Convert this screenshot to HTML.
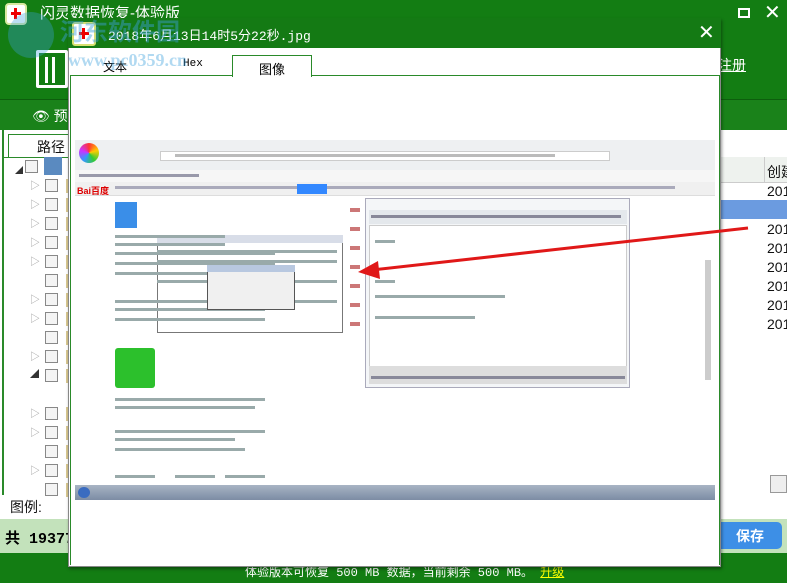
<!DOCTYPE html>
<html><head><meta charset="utf-8"><style>
*{margin:0;padding:0;box-sizing:border-box}
body{width:787px;height:583px;overflow:hidden;position:relative;background:#fff;font-family:"Liberation Sans","Noto Sans CJK SC",sans-serif}
.a{position:absolute}
.g{background:#137d13}
.t{color:#fff;font-size:14px;white-space:nowrap}
.cb{width:13px;height:13px;border:1px solid #888;background:#f4f4f4}
.r{font-size:14px;color:#111;white-space:nowrap}
.tx{height:3px;background:#9aa}
</style></head><body>
<div class="a g" style="left:0;top:0;width:787px;height:100px"></div>
<div class="a" style="left:5px;top:3px;width:22px;height:22px;background:#fff;border-radius:4px;border:2px solid #d8e8a0"><div class="a" style="left:4px;top:7px;width:10px;height:3px;background:#e00"></div><div class="a" style="left:7px;top:3px;width:3px;height:11px;background:#e00"></div></div>
<div class="a t" style="left:40px;top:2px;font-size:15px">闪灵数据恢复-体验版</div>
<div class="a" style="left:738px;top:8px;width:12px;height:10px;border:2px solid #fff"></div>
<div class="a t" style="left:764px;top:0;font-size:20px">✕</div>
<div class="a" style="left:36px;top:50px;width:32px;height:38px;border:3px solid #fff;border-radius:2px"><div class="a" style="left:6px;top:4px;width:3px;height:26px;background:#fff"></div><div class="a" style="left:13px;top:4px;width:3px;height:26px;background:#fff"></div></div>
<div class="a t" style="left:718px;top:55px;text-decoration:underline">注册</div>
<div class="a" style="left:0;top:99px;width:787px;height:1px;background:#0d5e0d"></div>
<div class="a" style="left:0;top:100px;width:787px;height:30px;background:#1a821a"></div>
<div class="a t" style="left:32px;top:106px">👁 预览</div>
<div class="a" style="left:0;top:130px;width:787px;height:365px;background:#fff"></div>
<div class="a" style="left:2px;top:130px;width:2px;height:365px;background:#2a8a2a"></div>
<div class="a" style="left:8px;top:134px;width:70px;height:24px;border:1px solid #2a8a2a;border-bottom:none"></div>
<div class="a r" style="left:37px;top:137px;font-size:14px">路径</div>
<div class="a" style="left:4px;top:157px;width:80px;height:1px;background:#2a8a2a"></div>
<div class="a cb" style="left:25px;top:160px"></div>
<div class="a" style="left:44px;top:157px;width:18px;height:18px;background:#5a8ac0"></div>
<div class="a" style="left:15px;top:165px;font-size:8px;color:#333">◢</div>
<div id="rows"></div>
<div class="a" style="left:720px;top:157px;width:67px;height:26px;background:#eef2ee;border-bottom:1px solid #ccc"></div>
<div class="a" style="left:764px;top:157px;width:1px;height:26px;background:#ccc"></div>
<div class="a r" style="left:767px;top:162px">创建</div>
<div class="a" style="left:720px;top:200px;width:67px;height:19px;background:#6b9be0"></div>
<div class="a" style="left:770px;top:475px;width:17px;height:18px;border:1px solid #999;background:#eee"></div>
<div class="a r" style="left:10px;top:497px">图例:</div>
<div class="a" style="left:0;top:519px;width:787px;height:34px;background:#c3e2bb"></div>
<div class="a" style="left:5px;top:527px;font-size:15px;font-weight:bold;font-family:'Liberation Mono','Noto Sans CJK SC',monospace">共 193775</div>
<div class="a" style="left:716px;top:522px;width:66px;height:27px;background:#3d8fe6;border-radius:5px;color:#fff;font-size:14px;font-weight:bold;padding:4px 0 0 20px">保存</div>
<div class="a g" style="left:0;top:553px;width:787px;height:30px"></div>
<div class="a t" style="left:245px;top:563px;font-size:12px;font-family:'Liberation Mono','Noto Sans CJK SC',monospace">体验版本可恢复 500 MB 数据，当前剩余 500 MB。 <span style="color:#ff0;text-decoration:underline">升级</span></div>
<div class="a" style="left:68px;top:18px;width:653px;height:549px;background:#fff;border:1px solid #888;box-shadow:1px 2px 3px rgba(0,0,0,.4)"></div>
<div class="a" style="left:68px;top:18px;width:653px;height:30px;background:#147a14"></div>
<div class="a" style="left:72px;top:22px;width:24px;height:24px;background:#fff;border:2px solid #d8e070;border-radius:3px"><div class="a" style="left:5px;top:8px;width:10px;height:3px;background:#e00"></div><div class="a" style="left:8px;top:4px;width:3px;height:11px;background:#e00"></div></div>
<div class="a t" style="left:108px;top:25px;font-size:13px;font-family:'Liberation Mono','Noto Sans CJK SC',monospace">2018年6月13日14时5分22秒.jpg</div>
<div class="a t" style="left:698px;top:20px;font-size:20px">✕</div>
<div class="a" style="left:103px;top:58px;font-size:12px">文本</div>
<div class="a" style="left:183px;top:58px;font-size:11px;font-family:'Liberation Mono',monospace">Hex</div>
<div class="a" style="left:232px;top:55px;width:80px;height:22px;border:1px solid #2a8a2a;border-bottom:none;background:#fff;font-size:13px;text-align:center;padding-top:3px">图像</div>
<div class="a" style="left:70px;top:75px;width:162px;height:1px;background:#2a8a2a"></div>
<div class="a" style="left:312px;top:75px;width:408px;height:1px;background:#2a8a2a"></div>
<div class="a" style="left:70px;top:75px;width:1px;height:490px;background:#2a8a2a"></div>
<div class="a" style="left:719px;top:75px;width:1px;height:490px;background:#2a8a2a"></div>
<div class="a" style="left:75px;top:140px;width:640px;height:346px;background:#fff;overflow:hidden" id="img">
 <div class="a" style="left:0;top:0;width:640px;height:30px;background:#eef0f2"></div>
 <div class="a" style="left:4px;top:3px;width:20px;height:20px;border-radius:50%;background:conic-gradient(#f33,#fc0,#3c3,#39f,#c3f,#f33)"></div>
 <div class="a" style="left:85px;top:11px;width:450px;height:10px;border:1px solid #ccc;background:#fff"></div>
 <div class="a tx" style="left:100px;top:14px;width:380px;background:#bbb"></div>
 <div class="a" style="left:0;top:30px;width:640px;height:12px;background:#f6f6f6"></div>
 <div class="a tx" style="left:4px;top:34px;width:120px;background:#99a"></div>
 <div class="a" style="left:0;top:42px;width:640px;height:14px;background:#f0f0f0;border-bottom:1px solid #ddd"></div>
 <div class="a tx" style="left:40px;top:46px;width:560px;background:#aab"></div>
 <div class="a" style="left:2px;top:44px;font-size:9px;color:#d00;font-weight:bold">Bai百度</div>
 <div class="a" style="left:222px;top:44px;width:30px;height:10px;background:#38f"></div>
 <div class="a" style="left:40px;top:62px;width:22px;height:26px;background:#3a8ee8"></div>
 <div class="a" style="left:40px;top:208px;width:40px;height:40px;background:#2cc02c;border-radius:3px"></div>
 <div class="a" style="left:82px;top:95px;width:186px;height:98px;background:#fff;border:1px solid #777"></div>
 <div class="a" style="left:82px;top:95px;width:186px;height:8px;background:#d8dde8"></div>
 <div class="a" style="left:290px;top:58px;width:265px;height:190px;background:#f4f6f8;border:1px solid #aab"></div>
 <div class="a" style="left:294px;top:70px;width:258px;height:14px;background:#e4e8ec"></div>
 <div class="a tx" style="left:296px;top:75px;width:250px;background:#889"></div>
 <div class="a" style="left:294px;top:85px;width:258px;height:142px;background:#fff;border:1px solid #ccc"></div>
 <div class="a tx" style="left:300px;top:100px;width:20px"></div>
 <div class="a tx" style="left:300px;top:140px;width:20px"></div>
 <div class="a tx" style="left:300px;top:155px;width:130px"></div>
 <div class="a tx" style="left:300px;top:176px;width:100px"></div>
 <div class="a" style="left:294px;top:226px;width:258px;height:18px;background:#ddd"></div>
 <div class="a tx" style="left:296px;top:236px;width:254px;background:#889"></div>
 <div class="a" style="left:630px;top:120px;width:6px;height:120px;background:#ccc"></div>
 <div class="a" style="left:275px;top:60px;width:10px;height:130px;background:repeating-linear-gradient(#fff 0 8px,#c77 8px 12px,#fff 12px 19px)"></div>
</div>
<div class="a" style="left:75px;top:485px;width:640px;height:15px;background:linear-gradient(#a8b4c4,#7c8ca4)"></div>
<div class="a" style="left:78px;top:487px;width:12px;height:11px;border-radius:50%;background:#3a6cc0"></div>
<svg class="a" style="left:0;top:0" width="787" height="583"><line x1="748" y1="228" x2="372" y2="270" stroke="#e01818" stroke-width="3"/><polygon points="358,272 378,261 380,279" fill="#e01818"/></svg>
<div class="a" style="left:60px;top:12px;font-size:24px;font-weight:bold;color:rgba(60,160,220,.45)">河东软件园</div>
<div class="a" style="left:68px;top:50px;font-size:18px;font-weight:bold;color:rgba(60,160,220,.4);font-family:'Liberation Serif',serif">www.pc0359.cn</div>
<div class="a" style="left:8px;top:12px;width:46px;height:46px;border-radius:50%;background:rgba(60,160,220,.35)"></div>
<script>
var h='',ys=[184,203,222,241,260,279,298,317,336,355,374,393,412,431,450,469,488],ex=[1,1,1,1,1,0,1,1,0,1,2,0,1,1,0,1,0];
for(var i=0;i<ys.length;i++){if(i==11)continue;var y=ys[i];h+='<div class="a cb" style="left:45px;top:'+(y-5)+'px"></div><div class="a" style="left:66px;top:'+(y-5)+'px;width:6px;height:14px;background:#d8c890"></div>';if(ex[i]==1)h+='<div class="a" style="left:30px;top:'+(y-7)+'px;font-size:10px;color:#999">▷</div>';if(ex[i]==2)h+='<div class="a" style="left:30px;top:'+(y-7)+'px;font-size:9px;color:#333">◢</div>';}
for(var j=0;j<8;j++){h+='<div class="a r" style="left:767px;top:'+(183+j*19)+'px">201</div>';}
document.getElementById('rows').innerHTML=h;
var m='',L=[[40,95,110],[40,103,110],[40,112,160],[40,122,160],[40,132,160],[40,160,160],[40,168,150],[40,178,150],[82,110,180],[82,120,180],[82,140,180],[82,160,180],[40,258,150],[40,266,140],[40,290,150],[40,298,120],[40,308,130],[40,335,40],[100,335,40],[150,335,40]];
for(var k=0;k<L.length;k++)m+='<div class="a tx" style="left:'+L[k][0]+'px;top:'+L[k][1]+'px;width:'+L[k][2]+'px"></div>';
m+='<div class="a" style="left:132px;top:125px;width:88px;height:45px;background:#f0f0f0;border:1px solid #555"></div><div class="a" style="left:132px;top:125px;width:88px;height:7px;background:#b8c8e0"></div>';
document.getElementById('img').insertAdjacentHTML('beforeend',m);
</script>
</body></html>
